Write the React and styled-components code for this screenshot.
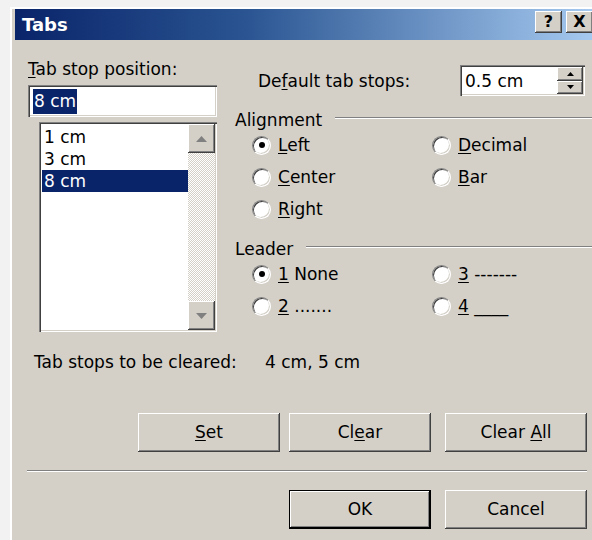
import React from "react";
import styled, { createGlobalStyle, css } from "styled-components";

const face = "#d4d0c8";
const shadow = "#808080";
const darkShadow = "#404040";
const highlight = "#ffffff";
const selection = "#0a246a";

const GlobalStyle = createGlobalStyle`
  html, body {
    margin: 0;
    padding: 0;
    height: 540px;
    overflow: hidden;
    background: #f2f2f2;
  }
  body {
    font-family: "DejaVu Sans", "Liberation Sans", sans-serif;
    font-size: 17px;
    color: #000;
  }
  *, *::before, *::after { box-sizing: border-box; }
`;

const raised = css`
  background: ${face};
  box-shadow:
    inset -1px -1px 0 ${darkShadow},
    inset 1px 1px 0 ${highlight},
    inset -2px -2px 0 ${shadow},
    inset 2px 2px 0 ${face};
`;

const sunken = css`
  background: #fff;
  box-shadow:
    inset 1px 1px 0 ${shadow},
    inset 2px 2px 0 ${darkShadow},
    inset -1px -1px 0 ${highlight},
    inset -2px -2px 0 ${face};
`;

const Window = styled.div`
  margin: 7px 0 0 10px;
  width: 590px;
  min-height: 560px;
  border-top: 2px solid #fff;
  border-left: 2px solid #fff;
  padding: 0 5px 0 3px;
  background: ${face};
`;

const TitleBar = styled.div`
  height: 31px;
  display: flex;
  align-items: flex-start;
  padding: 2px 2px 0 7px;
  background: linear-gradient(to right, ${selection} 0%, #2a5592 40%, #a6caf0 100%);
`;

const Title = styled.div`
  flex: 1;
  color: #fff;
  font-weight: bold;
  font-size: 18px;
  line-height: 27px;
`;

const TitleButton = styled.div`
  ${raised};
  width: 27px;
  height: 22px;
  margin-left: ${(p) => (p.$first ? "0" : "4px")};
  font-weight: bold;
  font-size: 16px;
  line-height: 22px;
  text-align: center;
`;

const Content = styled.div`
  padding: 0 8px 0 13px;
`;

const TopGrid = styled.div`
  display: grid;
  grid-template-columns: 189px 1fr;
  column-gap: 18px;
`;

const LeftCol = styled.div`
  display: flex;
  flex-direction: column;
  padding-top: 19px;
`;

const FieldLabel = styled.div`
  line-height: 20px;
  height: 20px;
  white-space: nowrap;
`;

const Key = styled.span`
  text-decoration: underline;
  text-underline-offset: 2px;
`;

const TextField = styled.div`
  ${sunken};
  margin-top: 6px;
  height: 32px;
  padding: 0 4px 0 5px;
  display: flex;
  align-items: center;
`;

const Selected = styled.span`
  background: ${selection};
  color: #fff;
  line-height: 25px;
  padding: 0 1px;
`;

const ListBox = styled.div`
  ${sunken};
  margin: 5px 0 0 11px;
  height: 210px;
  display: flex;
  padding: 2px;
`;

const Items = styled.div`
  flex: 1;
  padding-top: 2px;
  padding-left: 1px;
`;

const Item = styled.div`
  height: 22px;
  line-height: 22px;
  padding-left: 2px;
  background: ${(p) => (p.$active ? selection : "transparent")};
  color: ${(p) => (p.$active ? "#fff" : "#000")};
`;

const ScrollBar = styled.div`
  width: 27px;
  display: flex;
  flex-direction: column;
  justify-content: space-between;
  background: repeating-conic-gradient(${face} 0 25%, #fff 0 50%) 0 0 / 2px 2px;
`;

const ScrollButton = styled.div`
  ${raised};
  height: 29px;
  display: grid;
  place-items: center;
`;

const RightCol = styled.div`
  padding-top: 25px;
`;

const DefaultRow = styled.div`
  display: flex;
  align-items: center;
  padding-left: 23px;
`;

const RowLabel = styled.div`
  flex: 1;
  white-space: nowrap;
`;

const Spinner = styled.div`
  ${sunken};
  width: 125px;
  height: 31px;
  margin-right: 2px;
  display: flex;
  align-items: center;
  padding: 2px 2px 2px 5px;
`;

const SpinText = styled.div`
  flex: 1;
`;

const SpinButtons = styled.div`
  width: 26px;
  height: 27px;
  display: flex;
  flex-direction: column;
`;

const SpinButton = styled.div`
  ${raised};
  flex: 1;
  display: grid;
  place-items: center;
`;

const Group = styled.div`
  margin-top: ${(p) => p.$top}px;
`;

const Legend = styled.div`
  display: flex;
  height: 18px;
  line-height: 18px;
`;

const Rule = styled.div`
  flex: 1;
  height: 2px;
  margin: 6px -12px 0 13px;
  border-top: 1px solid ${shadow};
  border-bottom: 1px solid #fff;
`;

const Options = styled.div`
  display: grid;
  grid-template-columns: 180px 1fr;
  grid-auto-rows: 32px;
  padding-left: 17px;
`;

const Option = styled.label`
  display: flex;
  align-items: center;
  gap: 7px;
  white-space: nowrap;
`;

const Radio = styled.span`
  flex: none;
  width: 19px;
  height: 19px;
  border-radius: 50%;
  background: #fff;
  border: 1px solid;
  border-color: ${shadow} #fff #fff ${shadow};
  box-shadow: inset 1px 1px 0 ${darkShadow}, inset -1px -1px 0 ${face};
  display: grid;
  place-items: center;
  &::after {
    content: "";
    width: 6px;
    height: 6px;
    border-radius: 50%;
    background: ${(p) => (p.$checked ? "#000" : "transparent")};
  }
`;

const ClearedRow = styled.div`
  margin-top: 20px;
  padding-left: 6px;
  line-height: 20px;
  display: flex;
  white-space: nowrap;
`;

const ClearedLabel = styled.span`
  width: 231px;
`;

const ButtonRow = styled.div`
  margin-top: ${(p) => p.$top}px;
  display: flex;
  justify-content: flex-end;
  gap: 14px;
`;

const Button = styled.div`
  ${raised};
  width: 142px;
  height: 39px;
  line-height: 39px;
  text-align: center;
  margin-right: ${(p) => (p.$tight ? "-5px" : "0")};
  ${(p) =>
    p.$default &&
    css`
      box-shadow:
        inset 0 0 0 1px #000,
        inset -2px -2px 0 #000,
        inset 2px 2px 0 ${highlight},
        inset -3px -3px 0 ${shadow};
    `}
`;

const Separator = styled.div`
  margin: 18px 0 0 -1px;
  height: 2px;
  border-top: 1px solid ${shadow};
  border-bottom: 1px solid #fff;
`;

const ArrowUp = ({ color = "#000", w = 9, h = 5 }) => (
  <svg width={w} height={h} viewBox={`0 0 ${w} ${h}`}>
    <polygon points={`0,${h} ${w},${h} ${w / 2},0`} fill={color} />
  </svg>
);

const ArrowDown = ({ color = "#000", w = 9, h = 5 }) => (
  <svg width={w} height={h} viewBox={`0 0 ${w} ${h}`}>
    <polygon points={`0,0 ${w},0 ${w / 2},${h}`} fill={color} />
  </svg>
);

const alignment = [
  [{ k: "L", rest: "eft", checked: true }, { k: "D", rest: "ecimal" }],
  [{ k: "C", rest: "enter" }, { k: "B", rest: "ar" }],
  [{ k: "R", rest: "ight" }],
];

const leaders = [
  [{ k: "1", rest: " None", checked: true }, { k: "3", rest: " -------" }],
  [{ k: "2", rest: " ......." }, { k: "4", rest: " ____" }],
];

const OptionGrid = ({ rows }) => (
  <Options>
    {rows.flat().map((o) => (
      <Option key={o.k}>
        <Radio $checked={o.checked} />
        <span>
          <Key>{o.k}</Key>
          {o.rest}
        </span>
      </Option>
    ))}
  </Options>
);

export default function App() {
  return (
    <>
      <GlobalStyle />
      <Window>
        <TitleBar>
          <Title>Tabs</Title>
          <TitleButton $first>?</TitleButton>
          <TitleButton>X</TitleButton>
        </TitleBar>
        <Content>
          <TopGrid>
            <LeftCol>
              <FieldLabel>
                <Key>T</Key>ab stop position:
              </FieldLabel>
              <TextField>
                <Selected>8 cm</Selected>
              </TextField>
              <ListBox>
                <Items>
                  <Item>1 cm</Item>
                  <Item>3 cm</Item>
                  <Item $active>8 cm</Item>
                </Items>
                <ScrollBar>
                  <ScrollButton>
                    <ArrowUp color={shadow} w={11} h={6} />
                  </ScrollButton>
                  <ScrollButton>
                    <ArrowDown color={shadow} w={11} h={6} />
                  </ScrollButton>
                </ScrollBar>
              </ListBox>
            </LeftCol>
            <RightCol>
              <DefaultRow>
                <RowLabel>
                  De<Key>f</Key>ault tab stops:
                </RowLabel>
                <Spinner>
                  <SpinText>0.5 cm</SpinText>
                  <SpinButtons>
                    <SpinButton>
                      <ArrowUp w={7} h={4} />
                    </SpinButton>
                    <SpinButton>
                      <ArrowDown w={7} h={4} />
                    </SpinButton>
                  </SpinButtons>
                </Spinner>
              </DefaultRow>
              <Group $top={15}>
                <Legend>
                  <span>Alignment</span>
                  <Rule />
                </Legend>
                <OptionGrid rows={alignment} />
              </Group>
              <Group $top={15}>
                <Legend>
                  <span>Leader</span>
                  <Rule />
                </Legend>
                <OptionGrid rows={leaders} />
              </Group>
            </RightCol>
          </TopGrid>
          <ClearedRow>
            <ClearedLabel>Tab stops to be cleared:</ClearedLabel>
            <span>4 cm, 5 cm</span>
          </ClearedRow>
          <ButtonRow $top={41}>
            <Button $tight>
              <Key>S</Key>et
            </Button>
            <Button>
              Cl<Key>e</Key>ar
            </Button>
            <Button>
              Clear <Key>A</Key>ll
            </Button>
          </ButtonRow>
          <Separator />
          <ButtonRow $top={18}>
            <Button $default>OK</Button>
            <Button>Cancel</Button>
          </ButtonRow>
        </Content>
      </Window>
    </>
  );
}
